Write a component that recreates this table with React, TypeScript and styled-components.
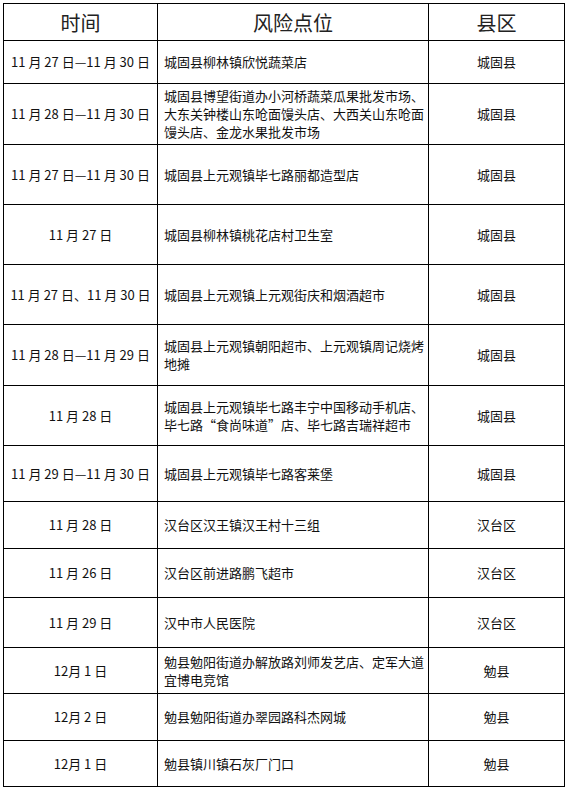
import React from "react";
import styled, { createGlobalStyle } from "styled-components";

const GlobalStyle = createGlobalStyle`
  html, body {
    margin: 0;
    padding: 0;
    background: #ffffff;
  }
  body {
    font-family: "Noto Sans CJK SC", "Liberation Sans", sans-serif;
    color: #111;
  }
`;

const Page = styled.div`
  padding: 3px 0 0 3px;
`;

const Table = styled.table`
  border-collapse: collapse;
  table-layout: fixed;
  width: 561px;
`;

const HeadCell = styled.th`
  height: 36px;
  padding: 0;
  border: 1px solid #000;
  font-size: 20px;
  font-weight: normal;
  color: #222;
  text-align: center;
  vertical-align: middle;
`;

const Row = styled.tr<{ $h: number }>`
  height: ${(p) => p.$h}px;
`;

const Cell = styled.td<{ $center?: boolean }>`
  padding: ${(p) => (p.$center ? "0 2px" : "0 3px 0 6px")};
  border: 1px solid #000;
  font-size: 13px;
  line-height: 18px;
  color: #111;
  text-align: ${(p) => (p.$center ? "center" : "left")};
  vertical-align: middle;
  word-break: break-all;
`;

const rows = [
  { date: "11 月 27 日—11 月 30 日", place: "城固县柳林镇欣悦蔬菜店", area: "城固县", h: 43 },
  {
    date: "11 月 28 日—11 月 30 日",
    place: "城固县博望街道办小河桥蔬菜瓜果批发市场、大东关钟楼山东呛面馒头店、大西关山东呛面馒头店、金龙水果批发市场",
    area: "城固县",
    h: 61,
  },
  { date: "11 月 27 日—11 月 30 日", place: "城固县上元观镇毕七路丽都造型店", area: "城固县", h: 60 },
  { date: "11 月 27 日", place: "城固县柳林镇桃花店村卫生室", area: "城固县", h: 60 },
  { date: "11 月 27 日、11 月 30 日", place: "城固县上元观镇上元观街庆和烟酒超市", area: "城固县", h: 60 },
  { date: "11 月 28 日—11 月 29 日", place: "城固县上元观镇朝阳超市、上元观镇周记烧烤地摊", area: "城固县", h: 61 },
  {
    date: "11 月 28 日",
    place: "城固县上元观镇毕七路丰宁中国移动手机店、毕七路“食尚味道”店、毕七路吉瑞祥超市",
    area: "城固县",
    h: 60,
  },
  { date: "11 月 29 日—11 月 30 日", place: "城固县上元观镇毕七路客莱堡", area: "城固县", h: 56 },
  { date: "11 月 28 日", place: "汉台区汉王镇汉王村十三组", area: "汉台区", h: 47 },
  { date: "11 月 26 日", place: "汉台区前进路鹏飞超市", area: "汉台区", h: 49 },
  { date: "11 月 29 日", place: "汉中市人民医院", area: "汉台区", h: 50 },
  { date: "12月 1 日", place: "勉县勉阳街道办解放路刘师发艺店、定军大道宜博电竞馆", area: "勉县", h: 46 },
  { date: "12月 2 日", place: "勉县勉阳街道办翠园路科杰网城", area: "勉县", h: 47 },
  { date: "12月 1 日", place: "勉县镇川镇石灰厂门口", area: "勉县", h: 46 },
];

export default function App() {
  return (
    <Page>
      <GlobalStyle />
      <Table>
        <colgroup>
          <col style={{ width: 154 }} />
          <col style={{ width: 271 }} />
          <col style={{ width: 136 }} />
        </colgroup>
        <thead>
          <tr>
            <HeadCell>时间</HeadCell>
            <HeadCell>风险点位</HeadCell>
            <HeadCell>县区</HeadCell>
          </tr>
        </thead>
        <tbody>
          {rows.map((r, i) => (
            <Row key={i} $h={r.h}>
              <Cell $center>{r.date}</Cell>
              <Cell>{r.place}</Cell>
              <Cell $center>{r.area}</Cell>
            </Row>
          ))}
        </tbody>
      </Table>
    </Page>
  );
}
